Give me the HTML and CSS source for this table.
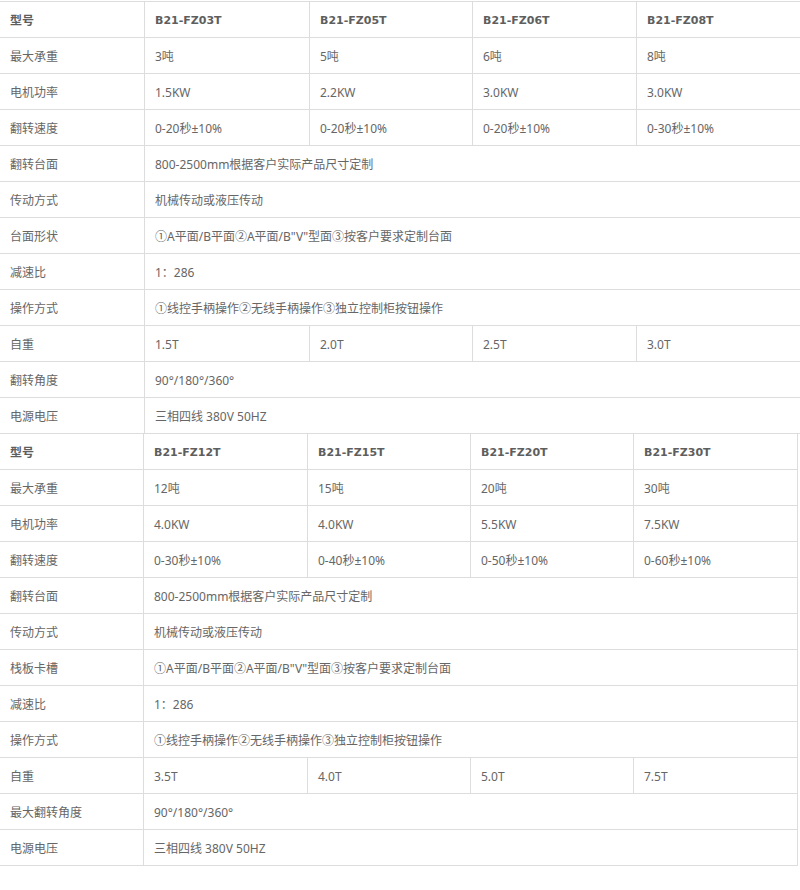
FILE: index.html
```html
<!DOCTYPE html>
<html lang="zh-CN">
<head>
<meta charset="utf-8">
<title>参数表</title>
<link rel="stylesheet" href="styles.css">
</head>
<body>
<div class="spec spec-a">
  <div class="c lab head">型号</div><div class="c model">B21-FZ03T</div><div class="c model">B21-FZ05T</div><div class="c model">B21-FZ06T</div><div class="c model last">B21-FZ08T</div>
  <div class="c lab">最大承重</div><div class="c">3吨</div><div class="c">5吨</div><div class="c">6吨</div><div class="c last">8吨</div>
  <div class="c lab">电机功率</div><div class="c">1.5KW</div><div class="c">2.2KW</div><div class="c">3.0KW</div><div class="c last">3.0KW</div>
  <div class="c lab">翻转速度</div><div class="c">0-20秒±10%</div><div class="c">0-20秒±10%</div><div class="c">0-20秒±10%</div><div class="c last">0-30秒±10%</div>
  <div class="c lab">翻转台面</div><div class="c span last">800-2500mm根据客户实际产品尺寸定制</div>
  <div class="c lab">传动方式</div><div class="c span last">机械传动或液压传动</div>
  <div class="c lab">台面形状</div><div class="c span last">①A平面/B平面②A平面/B"V"型面③按客户要求定制台面</div>
  <div class="c lab">减速比</div><div class="c span last">1：286</div>
  <div class="c lab">操作方式</div><div class="c span last">①线控手柄操作②无线手柄操作③独立控制柜按钮操作</div>
  <div class="c lab">自重</div><div class="c">1.5T</div><div class="c">2.0T</div><div class="c">2.5T</div><div class="c last">3.0T</div>
  <div class="c lab">翻转角度</div><div class="c span last">90°/180°/360°</div>
  <div class="c lab">电源电压</div><div class="c span last">三相四线 380V 50HZ</div>
</div>
<div class="spec spec-b">
  <div class="c lab head">型号</div><div class="c model">B21-FZ12T</div><div class="c model">B21-FZ15T</div><div class="c model">B21-FZ20T</div><div class="c model">B21-FZ30T</div>
  <div class="c lab">最大承重</div><div class="c">12吨</div><div class="c">15吨</div><div class="c">20吨</div><div class="c">30吨</div>
  <div class="c lab">电机功率</div><div class="c">4.0KW</div><div class="c">4.0KW</div><div class="c">5.5KW</div><div class="c">7.5KW</div>
  <div class="c lab">翻转速度</div><div class="c">0-30秒±10%</div><div class="c">0-40秒±10%</div><div class="c">0-50秒±10%</div><div class="c">0-60秒±10%</div>
  <div class="c lab">翻转台面</div><div class="c span">800-2500mm根据客户实际产品尺寸定制</div>
  <div class="c lab">传动方式</div><div class="c span">机械传动或液压传动</div>
  <div class="c lab">栈板卡槽</div><div class="c span">①A平面/B平面②A平面/B"V"型面③按客户要求定制台面</div>
  <div class="c lab">减速比</div><div class="c span">1：286</div>
  <div class="c lab">操作方式</div><div class="c span">①线控手柄操作②无线手柄操作③独立控制柜按钮操作</div>
  <div class="c lab">自重</div><div class="c">3.5T</div><div class="c">4.0T</div><div class="c">5.0T</div><div class="c">7.5T</div>
  <div class="c lab">最大翻转角度</div><div class="c span">90°/180°/360°</div>
  <div class="c lab">电源电压</div><div class="c span">三相四线 380V 50HZ</div>
</div>
</body>
</html>
```

FILE: styles.css
```css
html, body {
  margin: 0;
  padding: 0;
  background: #ffffff;
  overflow-x: hidden;
}

body {
  font-family: "Noto Sans", "Noto Sans CJK SC", sans-serif;
  font-size: 12px;
  color: #666666;
}

.spec {
  display: grid;
  grid-auto-rows: 36px;
}

.spec-a {
  margin-top: 1px;
  border-top: 1px solid #dddddd;
  grid-template-columns: 145px 165px 163px 164px 163px;
}

.spec-b {
  grid-template-columns: 144px 164px 163px 163px 164px;
  width: 798px;
}

.c {
  box-sizing: border-box;
  display: flex;
  align-items: center;
  padding-left: 10px;
  padding-top: 1px;
  border-right: 1px solid #dddddd;
  border-bottom: 1px solid #dddddd;
  white-space: nowrap;
  overflow: hidden;
}

.c.last {
  border-right: none;
}

.c.span {
  grid-column: 2 / -1;
}

.head {
  font-weight: bold;
  color: #5e5e5e;
}

.model {
  font-family: "DejaVu Sans", sans-serif;
  font-size: 11px;
  font-weight: bold;
  color: #5e5e5e;
}
```
